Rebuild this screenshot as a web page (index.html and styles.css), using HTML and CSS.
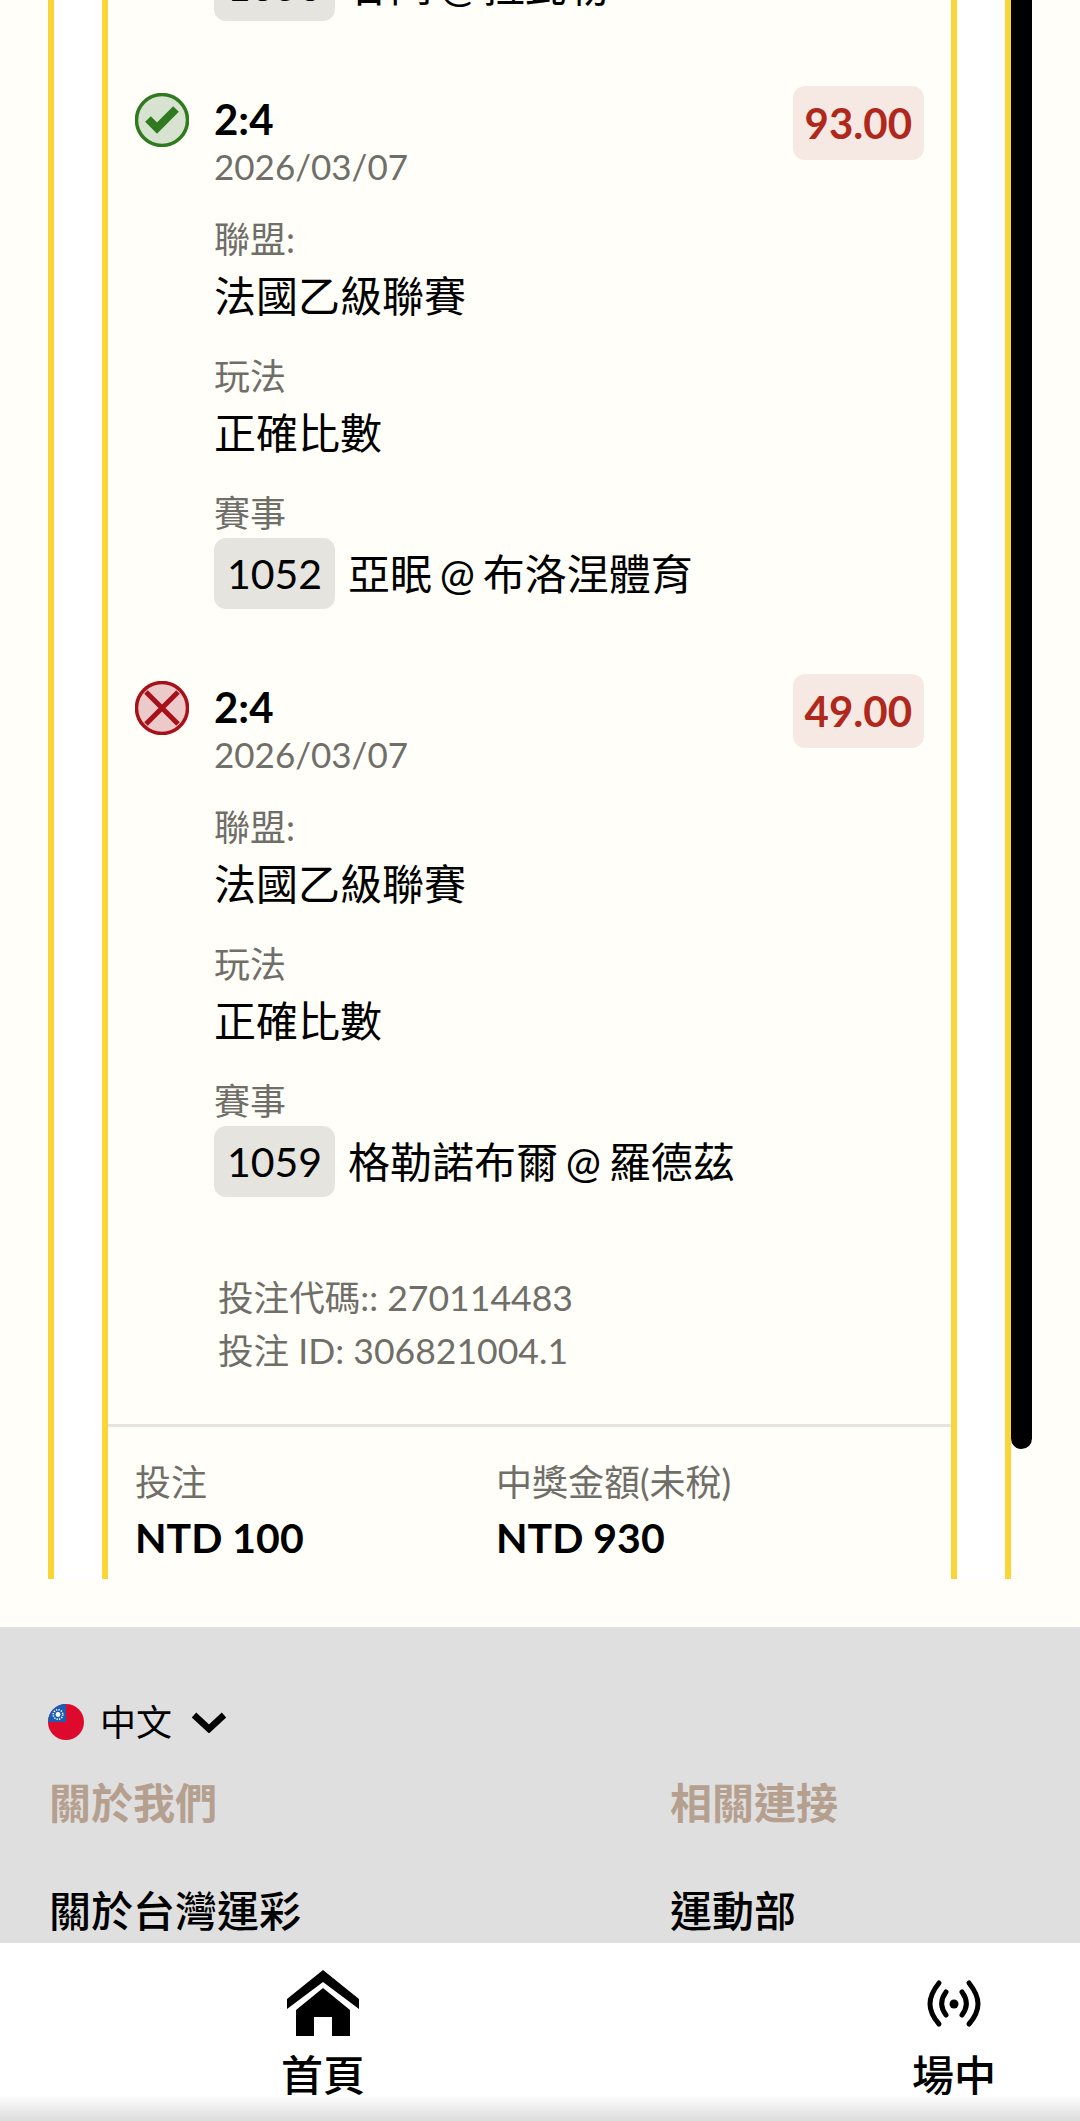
FILE: index.html
```html
<!DOCTYPE html>
<html lang="zh-Hant">
  <head>
    <meta charset="UTF-8" />
    <meta name="viewport" content="width=device-width, initial-scale=1.0" />
    <title>投注紀錄</title>
    <link rel="stylesheet" href="styles.css">
  </head>
  <body>
    <div class="page-top">
      <div class="outer-card">
        <div class="inner-card">
          <div class="bet-list">
            <div class="field cut-field">
              <div class="game-row">
                <span class="game-code">1050</span>
                <span class="value">甘岡 @ 拉瓦勒</span>
              </div>
            </div>

            <div class="bet">
              <svg class="status-icon" viewBox="0 0 54 54">
                <circle cx="27" cy="27" r="25.500" fill="#d8e2d0" stroke="#2f7a1f" stroke-width="3.500" />
                <path d="M13 26L22 35L41 16" fill="none" stroke="#2f7a1f" stroke-width="8" />
              </svg>
              <div class="bet-body">
                <div class="bet-head">
                  <div>
                    <div class="score">2:4</div>
                    <div class="date">2026/03/07</div>
                  </div>
                  <div class="odds">93.00</div>
                </div>
                <div class="field">
                  <div class="label">聯盟:</div>
                  <div class="value">法國乙級聯賽</div>
                </div>
                <div class="field">
                  <div class="label">玩法</div>
                  <div class="value">正確比數</div>
                </div>
                <div class="field">
                  <div class="label">賽事</div>
                  <div class="game-row">
                    <span class="game-code">1052</span>
                    <span class="value">亞眠 @ 布洛涅體育</span>
                  </div>
                </div>
              </div>
            </div>

            <div class="bet">
              <svg class="status-icon" viewBox="0 0 54 54">
                <circle cx="27" cy="27" r="25.500" fill="#eccaca" stroke="#a8111a" stroke-width="3.500" />
                <path d="M11 11l32 32M43 11L11 43" fill="none" stroke="#a8111a" stroke-width="5" />
              </svg>
              <div class="bet-body">
                <div class="bet-head">
                  <div>
                    <div class="score">2:4</div>
                    <div class="date">2026/03/07</div>
                  </div>
                  <div class="odds">49.00</div>
                </div>
                <div class="field">
                  <div class="label">聯盟:</div>
                  <div class="value">法國乙級聯賽</div>
                </div>
                <div class="field">
                  <div class="label">玩法</div>
                  <div class="value">正確比數</div>
                </div>
                <div class="field">
                  <div class="label">賽事</div>
                  <div class="game-row">
                    <span class="game-code">1059</span>
                    <span class="value">格勒諾布爾 @ 羅德茲</span>
                  </div>
                </div>
              </div>
            </div>
          </div>

          <div class="bet-codes">
            <div>投注代碼:: 270114483</div>
            <div>投注 ID: 306821004.1</div>
          </div>

          <div class="totals">
            <div class="total-col">
              <div class="total-label">投注</div>
              <div class="total-value">NTD 100</div>
            </div>
            <div class="total-col">
              <div class="total-label">中獎金額(未稅)</div>
              <div class="total-value">NTD 930</div>
            </div>
          </div>
        </div>
      </div>
      <div class="scroll-thumb"></div>
    </div>

    <div class="footer">
      <div class="lang">
        <svg class="flag" viewBox="0 0 36 36">
          <defs>
            <clipPath id="flagClip"><circle cx="18" cy="18" r="18" /></clipPath>
          </defs>
          <g clip-path="url(#flagClip)">
            <rect width="36" height="36" fill="#de0a2e" />
            <rect width="18" height="18" fill="#1c5cb4" />
            <circle cx="10" cy="10.500" r="4.800" fill="none" stroke="#fff" stroke-width="1.600" stroke-dasharray="1.300 1.200" />
            <circle cx="10" cy="10.500" r="2.400" fill="#fff" />
          </g>
        </svg>
        <span>中文</span>
        <svg class="chevron" viewBox="0 0 36 22">
          <path d="M3 4l15 14L33 4" fill="none" stroke="#000" stroke-width="6.500" />
        </svg>
      </div>
      <div class="footer-links">
        <div>
          <div class="footer-title">關於我們</div>
          <div class="footer-link">關於台灣運彩</div>
        </div>
        <div>
          <div class="footer-title">相關連接</div>
          <div class="footer-link">運動部</div>
        </div>
      </div>
    </div>

    <div class="bottom-nav">
      <div class="nav-item">
        <svg class="nav-icon" viewBox="0 0 72 66">
          <path d="M36 0L72 29V39L36 12L0 39V29Z" fill="#000" />
          <path d="M36 18L63 40V66H45V47H27V66H9V40Z" fill="#000" />
        </svg>
        <span>首頁</span>
      </div>
      <div class="nav-item">
        <svg class="nav-icon" viewBox="0 0 72 66">
          <circle cx="36" cy="34" r="4.500" fill="#000" />
          <path d="M28 22C22 30 22 37 28 45M44 22C50 30 50 37 44 45" fill="none" stroke="#000" stroke-width="5" stroke-linecap="round" />
          <path d="M21 13C9 28 9 40 21 54M51 13C63 28 63 40 51 54" fill="none" stroke="#000" stroke-width="5" stroke-linecap="round" />
        </svg>
        <span>場中</span>
      </div>
    </div>
  </body>
</html>
```

FILE: styles.css
```css
* {
  box-sizing: border-box;
}

body {
  height: 2121px;
  margin: 0;
  overflow: hidden;
  background: #fffef8;
  color: #000;
  font-family: Lato, "Noto Sans CJK TC", sans-serif;
}

.page-top {
  position: relative;
  height: 1627px;
  padding: 0 69px 48px 48px;
}

.outer-card {
  height: 1579px;
  padding: 0 48px;
  overflow: hidden;
  background: #fff;
  border-left: 6px solid #fad537;
  border-right: 6px solid #fad537;
}

.inner-card {
  background: #fffef8;
  border-left: 6px solid #fad537;
  border-right: 6px solid #fad537;
}

.bet-list {
  padding: 0 27px;
  margin-top: -75px;
}

.cut-field {
  margin: 0 0 75px 79px;
}

.bet {
  display: flex;
  gap: 25px;
  margin-bottom: 75px;
}

.status-icon {
  flex-shrink: 0;
  width: 54px;
  height: 54px;
  margin-top: -3px;
}

.bet-body {
  flex: 1;
}

.bet-head {
  display: flex;
  justify-content: space-between;
  align-items: flex-start;
  margin-bottom: 3px;
}

.score {
  font-size: 42px;
  font-weight: 700;
  line-height: 46px;
}

.date {
  font-size: 35px;
  line-height: 48px;
  color: #6f6e69;
}

.odds {
  margin-top: -10px;
  padding: 0 12px;
  height: 74px;
  line-height: 74px;
  font-size: 42px;
  font-weight: 700;
  color: #b0281c;
  background: #f6e9e3;
  border-radius: 12px;
}

.field {
  padding-top: 23px;
}

.label {
  font-size: 36px;
  line-height: 46px;
  color: #6f6e69;
}

.value {
  font-size: 42px;
  line-height: 68px;
  word-spacing: -3px;
}

.game-row {
  display: flex;
  align-items: center;
  gap: 13px;
  margin-top: 2px;
}

.game-code {
  width: 121px;
  height: 71px;
  font-size: 41px;
  line-height: 71px;
  text-align: center;
  background: #e5e4df;
  border-radius: 12px;
}

.bet-codes {
  margin-top: -1px;
  padding: 0 0 47px 110px;
  font-size: 35.600px;
  line-height: 53px;
  color: #6f6e69;
}

.totals {
  display: flex;
  padding: 32px 27px 60px;
  border-top: 3px solid #e5e4df;
}

.total-col {
  width: 361px;
}

.total-label {
  font-size: 36px;
  line-height: 46px;
  color: #6f6e69;
}

.total-value {
  margin-top: 5px;
  font-size: 41px;
  font-weight: 700;
  line-height: 56px;
}

.scroll-thumb {
  position: absolute;
  top: 0;
  left: 1011px;
  width: 21px;
  height: 1449px;
  background: #000;
  border-radius: 0 0 11px 11px;
}

.footer {
  padding: 72px 49px 0;
  height: 316px;
  background: #dfdfdf;
}

.lang {
  display: flex;
  align-items: center;
  gap: 16px;
  font-size: 36px;
  line-height: 46px;
}

.flag {
  width: 36px;
  height: 36px;
  margin-left: -1px;
}

.chevron {
  width: 38px;
  height: 22px;
  margin-left: 2px;
}

.footer-links {
  display: grid;
  grid-template-columns: 621px 1fr;
  margin-top: 30px;
}

.footer-title {
  font-size: 42px;
  font-weight: 700;
  line-height: 56px;
  color: #b5a08f;
}

.footer-link {
  margin-top: 53px;
  font-size: 42px;
  font-weight: 500;
  line-height: 54px;
}

.bottom-nav {
  position: fixed;
  left: 0;
  right: 0;
  bottom: 0;
  display: flex;
  justify-content: space-between;
  height: 178px;
  padding: 27px 84px 0 281px;
  background: linear-gradient(#fff 152px, #dcdcdc);
}

.nav-item {
  display: flex;
  flex-direction: column;
  align-items: center;
  width: 84px;
  font-size: 42px;
  font-weight: 500;
  line-height: 56px;
  white-space: nowrap;
}

.nav-icon {
  flex-shrink: 0;
  width: 72px;
  height: 66px;
  margin-bottom: 11px;
}
```
